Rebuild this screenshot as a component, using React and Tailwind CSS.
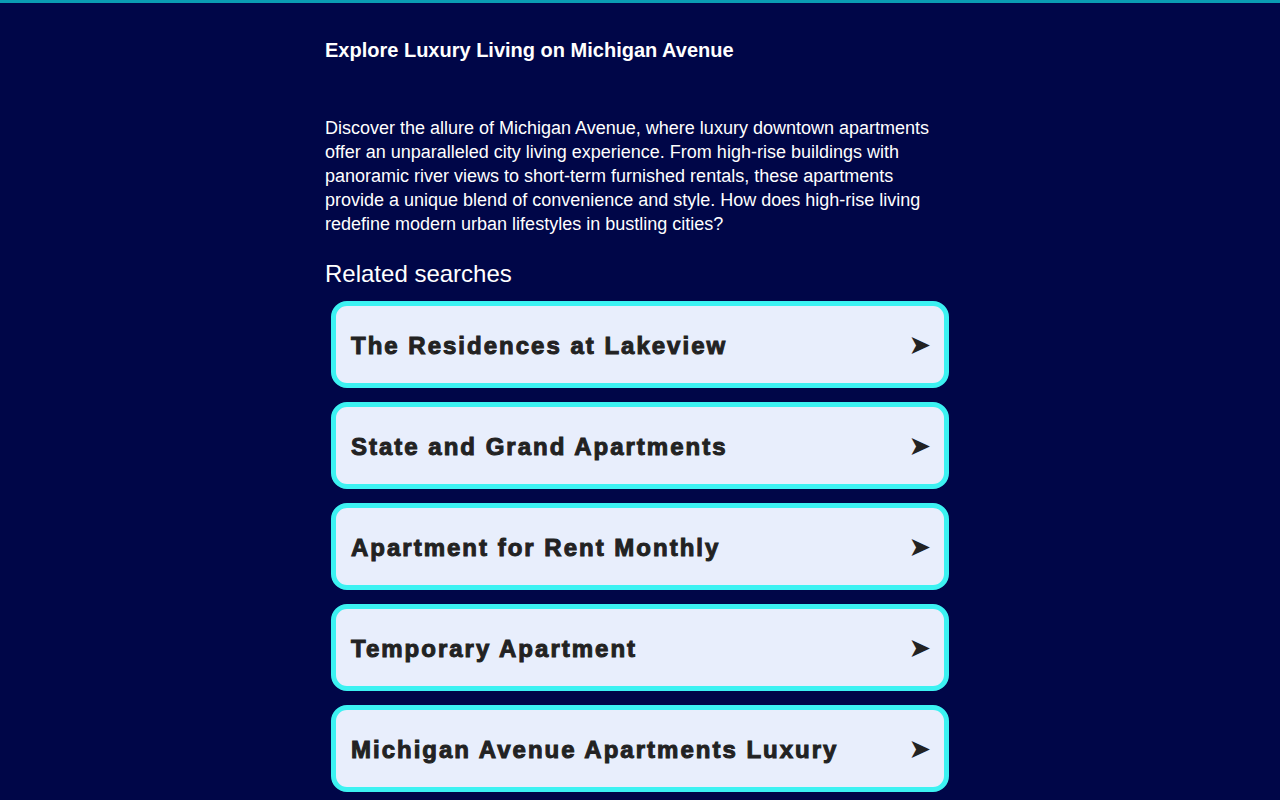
import React from 'react';

const searches = [
  'The Residences at Lakeview',
  'State and Grand Apartments',
  'Apartment for Rent Monthly',
  'Temporary Apartment',
  'Michigan Avenue Apartments Luxury',
];

const SearchCard = ({ label }) => (
  <a
    href="#"
    className="mx-[6px] flex h-[87px] items-center justify-between rounded-[16px] border-[5px] border-[#3cf2f2] bg-[#e8eefc] pl-[15px] pr-[13px] text-[#222222]"
  >
    <span className="pt-[3px] text-[24px] font-bold tracking-[2px] [-webkit-text-stroke:1px_#222222]">{label}</span>
    <span className="font-['DejaVu_Sans',sans-serif] text-[27px] leading-none">➤</span>
  </a>
);

const App = () => {
  return (
    <div className="min-h-screen border-t-[3px] border-[#0a9cb2] bg-[#000648] font-['Liberation_Sans',Arial,sans-serif] text-white">
      <main className="mx-auto w-[630px] pt-[35px]">
        <h1 className="text-[20px] font-bold leading-[24px]">Explore Luxury Living on Michigan Avenue</h1>
        <p className="mt-[54px] text-[18px] leading-[24px]">
          Discover the allure of Michigan Avenue, where luxury downtown apartments offer an unparalleled city living
          experience. From high-rise buildings with panoramic river views to short-term furnished rentals, these
          apartments provide a unique blend of convenience and style. How does high-rise living redefine modern urban
          lifestyles in bustling cities?
        </p>
        <h2 className="mt-[24px] text-[24px] leading-[28px]">Related searches</h2>
        <div className="mt-[13px] flex flex-col gap-[14px] pb-8">
          {searches.map((label) => (
            <SearchCard key={label} label={label} />
          ))}
        </div>
      </main>
    </div>
  );
};

export default App;
